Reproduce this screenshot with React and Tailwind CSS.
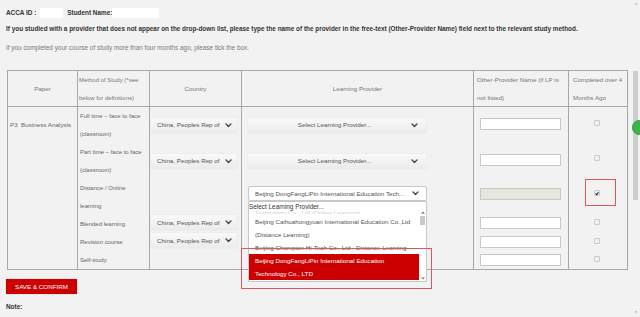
import React from "react";

function Chevron({ className = "" }) {
  return (
    <svg viewBox="0 0 10 10" className={"w-[7px] h-[7px] " + className}>
      <path d="M1.5 3 L5 6.5 L8.5 3" fill="none" stroke="#4a4a4a" strokeWidth="2" strokeLinecap="round" strokeLinejoin="round" />
    </svg>
  );
}

function CountrySelect() {
  return (
    <div className="ml-[1px] w-[86px] h-[15px] bg-gradient-to-b from-[#f9f9f9] to-[#ebebeb] shadow-[0_0_1px_rgba(0,0,0,0.12)] flex items-center justify-between pl-[6px] pr-[5px] text-[#555]">
      <span>China, Peoples Rep of</span>
      <Chevron />
    </div>
  );
}

function ProviderSelect() {
  return (
    <div className="ml-[6px] w-[178px] h-[15px] bg-gradient-to-b from-[#f9f9f9] to-[#ebebeb] shadow-[0_0_1px_rgba(0,0,0,0.12)] flex items-center pr-[8px] text-[#555]">
      <span className="flex-1 text-center pl-[10px]">Select Learning Provider...</span>
      <Chevron />
    </div>
  );
}

function TextInput({ disabled }) {
  return (
    <div
      className={
        "ml-[6px] w-[81px] h-[12px] border border-[#c8c8c8] " +
        (disabled ? "bg-[#e6e6df]" : "bg-white")
      }
    />
  );
}

function Checkbox({ checked }) {
  return (
    <div className="w-[6px] h-[6px] border border-[#cacaca] bg-[#f0f0f0] rounded-[1px] flex items-center justify-center">
      {checked && (
        <svg viewBox="0 0 6 6" className="w-[5px] h-[5px]">
          <path d="M0.8 3 L2.4 4.7 L5.2 1.2" fill="none" stroke="#222" strokeWidth="1.6" />
        </svg>
      )}
    </div>
  );
}

export default function App() {
  return (
    <div className="relative w-[640px] h-[317px] overflow-hidden bg-[#f2f2f2] font-['Liberation_Sans',Arial,sans-serif] text-[6.25px] text-[#666]">
      <div className="pl-[6px] pt-[8px]">
        <div className="text-[6.4px]">
          <div className="flex items-center h-[10px] font-bold text-[#333]">
            <span>ACCA ID :</span>
            <div className="ml-[4px] w-[23px] h-[10px] bg-white" />
            <span className="ml-[4px]">Student Name:</span>
            <div className="w-[47px] h-[10px] bg-white" />
          </div>
          <div className="mt-[6px] h-[10px] leading-[10px] font-bold text-[#333] whitespace-nowrap">
            If you studied with a provider that does not appear on the drop-down list, please type the name of the provider in the free-text (Other-Provider Name) field next to the relevant study method.
          </div>
          <div className="mt-[9px] h-[10px] leading-[10px] text-[#7a7a7a] whitespace-nowrap">
            If you completed your course of study more than four months ago, please tick the box.
          </div>
        </div>

        {/* table */}
        <div className="mt-[17px] ml-[1px] w-[621px] border border-[#a8a8a8]">
          {/* header */}
          <div className="flex h-[36px] border-b border-[#a8a8a8] text-[#777] leading-[18px]">
            <div className="w-[70px] border-r border-[#a8a8a8] flex items-center justify-center">Paper</div>
            <div className="w-[72px] border-r border-[#a8a8a8] flex flex-col justify-center pl-[1px] text-[6px]">
              <span>Method of Study (*see</span>
              <span>below for definitions)</span>
            </div>
            <div className="w-[92px] border-r border-[#a8a8a8] flex items-center justify-center">Country</div>
            <div className="w-[232px] border-r border-[#a8a8a8] flex items-center justify-center">Learning Provider</div>
            <div className="w-[95px] border-r border-[#a8a8a8] flex flex-col justify-center pl-[3px]">
              <span>Other-Provider Name (if LP is</span>
              <span>not listed)</span>
            </div>
            <div className="w-[58px] flex flex-col justify-center pl-[4px]">
              <span>Completed over 4</span>
              <span>Months Ago</span>
            </div>
          </div>
          {/* body */}
          <div className="flex h-[162px] leading-[18px]">
            <div className="w-[70px] border-r border-[#a8a8a8]">
              <div className="h-[36px] flex items-center pl-[2px] pb-[1px] whitespace-nowrap">P3&nbsp;&nbsp;Business Analysis</div>
            </div>
            <div className="w-[72px] border-r border-[#a8a8a8] pl-[2px] flex flex-col text-[6px] whitespace-nowrap">
              <span>Full time – face to face</span>
              <span>(classroom)</span>
              <span>Part time – face to face</span>
              <span>(classroom)</span>
              <span>Distance / Online</span>
              <span>learning</span>
              <span>Blended learning</span>
              <span>Revision course</span>
              <span>Self-study</span>
            </div>
            <div className="w-[92px] border-r border-[#a8a8a8] flex flex-col">
              <div className="h-[36px] flex items-center"><CountrySelect /></div>
              <div className="h-[36px] flex items-center"><CountrySelect /></div>
              <div className="h-[36px]" />
              <div className="h-[18px] flex items-center pb-[3px]"><CountrySelect /></div>
              <div className="h-[18px] flex items-center pb-[3px]"><CountrySelect /></div>
              <div className="h-[18px]" />
            </div>
            <div className="w-[232px] border-r border-[#a8a8a8] flex flex-col">
              <div className="h-[36px] flex items-center"><ProviderSelect /></div>
              <div className="h-[36px] flex items-center"><ProviderSelect /></div>
              <div className="h-[36px] pt-[7px]">
                <div className="relative ml-[6px] w-[179px] h-[15px] bg-white border border-[#c8c8c8] rounded-[2px] flex items-center pl-[6px] pr-[7px] text-[#555]">
                  <span className="flex-1 whitespace-nowrap">Beijing DongFangLiPin International Education Tech...</span>
                  <Chevron />
                  {/* open list */}
                  <div className="absolute left-[-1px] top-[14px] w-[179px] h-[81px] bg-white border border-[#c8c8c8] overflow-hidden leading-[13px] z-10">
                    <div className="absolute left-[6px] top-[9px] h-[3px] overflow-hidden">
                      <div className="mt-[-5px] text-[#cfcfcf] whitespace-nowrap">Technology Co., Ltd (Online Learning)</div>
                    </div>
                    <div className="absolute left-[0px] top-[-2px] h-[13px] text-[6.4px] text-[#333] whitespace-nowrap">Select Learning Provider...</div>
                    <div className="absolute left-0 top-[13px] w-[171px] flex flex-col">
                      <div className="pl-[6px] whitespace-nowrap text-[#555]">
                        <div>Beijing Caihuahongyuan International Education Co.,Ltd</div>
                        <div>(Distance Learning)</div>
                      </div>
                      <div className="pl-[6px] whitespace-nowrap text-[#555]">Beijing Champion Hi-Tech Co., Ltd - Distance Learning</div>
                      <div className="pl-[6px] whitespace-nowrap bg-[#cc0000] text-white">
                        <div>Beijing DongFangLiPin International Education</div>
                        <div>Technology Co., LTD</div>
                      </div>
                    </div>
                    {/* list scrollbar */}
                    <div className="absolute right-0 top-[6px] w-[7px] h-[74px] bg-white flex flex-col items-center">
                      <svg viewBox="0 0 6 4" className="mt-[3px] w-[4px] h-[3px]"><path d="M0 4 L3 0 L6 4 Z" fill="#8a8a8a" /></svg>
                      <div className="mt-[2px] w-[5px] h-[9px] bg-[#c9c9c9]" />
                      <div className="flex-1" />
                      <svg viewBox="0 0 6 4" className="mb-[2px] w-[4px] h-[3px]"><path d="M0 0 L3 4 L6 0 Z" fill="#8a8a8a" /></svg>
                    </div>
                  </div>
                </div>
              </div>
              <div className="h-[18px]" />
              <div className="h-[18px]" />
              <div className="h-[18px]" />
            </div>
            <div className="w-[95px] border-r border-[#a8a8a8] flex flex-col">
              <div className="h-[36px] flex items-center pb-[2px]"><TextInput /></div>
              <div className="h-[36px] flex items-center pb-[2px]"><TextInput /></div>
              <div className="h-[36px] flex items-center pb-[6px]"><TextInput disabled /></div>
              <div className="h-[18px] flex items-center pb-[2px]"><TextInput /></div>
              <div className="h-[18px] flex items-center"><TextInput /></div>
              <div className="h-[18px] flex items-center"><TextInput /></div>
            </div>
            <div className="w-[58px] flex flex-col">
              <div className="h-[36px] flex items-center justify-center pb-[4px] pr-[2px]"><Checkbox /></div>
              <div className="h-[36px] flex items-center justify-center pb-[6px] pr-[2px]"><Checkbox /></div>
              <div className="h-[36px] flex items-center justify-center pb-[8px] pr-[2px]"><Checkbox checked /></div>
              <div className="h-[18px] flex items-center justify-center pb-[4px] pr-[2px]"><Checkbox /></div>
              <div className="h-[18px] flex items-center justify-center pb-[2px] pr-[2px]"><Checkbox /></div>
              <div className="h-[18px] flex items-center justify-center pb-[2px] pr-[2px]"><Checkbox /></div>
            </div>
          </div>
        </div>

        <div className="mt-[9px] w-[71px] h-[15px] bg-[#cc0000] text-white flex items-center justify-center shadow-[0_0_1px_rgba(0,0,0,0.3)]">
          SAVE &amp; CONFIRM
        </div>
        <div className="mt-[8px] h-[10px] leading-[10px] font-bold text-[#333] text-[6.4px]">Note:</div>
      </div>

      {/* annotations */}
      <div className="absolute left-[585px] top-[179px] w-[31px] h-[27px] border border-[#e2545c]" />
      <div className="absolute left-[241px] top-[248px] w-[191px] h-[41px] border border-[#e2545c] z-20" />

      {/* side scrollbar + widget */}
      <div className="absolute left-[633px] top-[71px] w-[5px] h-[129px] bg-[#cdcdcd]" />
      <div className="absolute left-[632px] top-[120px] w-[15px] h-[15px] rounded-full bg-[#3cb54a] border border-[#2f9a3c]" />
      <div className="absolute left-[635px] top-[1px] text-[6px] text-[#999]">*</div>
      <div className="absolute left-[635px] top-[309px] text-[6px] text-[#999]">*</div>
    </div>
  );
}
